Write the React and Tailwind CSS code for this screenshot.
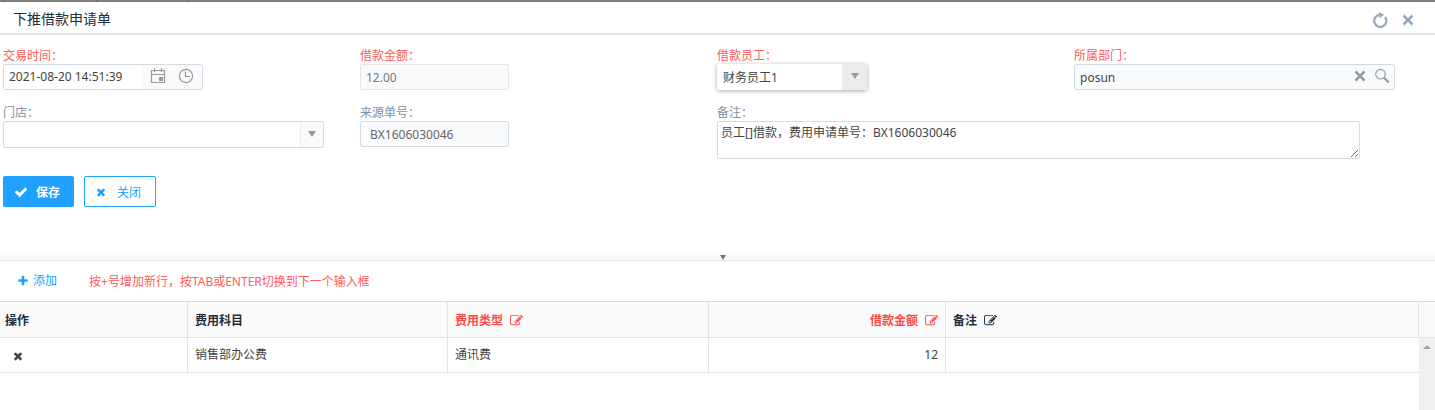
import { useState } from 'react';

// Icon shapes share the 1792 unit grid
const ICONS = {
  edit: 'M888 1184l116-116-152-152-116 116v56h96v96h56zm440-720q-16-16-33 1l-350 350q-17 17-1 33t33-1l350-350q17-17 1-33zm80 594v190q0 119-84.5 203.5t-203.5 84.5h-832q-119 0-203.5-84.5t-84.5-203.5v-832q0-119 84.5-203.5t203.5-84.5h832q63 0 117 25 15 7 18 23 3 17-9 29l-49 49q-14 14-32 8-23-6-45-6h-832q-66 0-113 47t-47 113v832q0 66 47 113t113 47h832q66 0 113-47t47-113v-126q0-13 9-22l64-64q15-15 35-7t20 29zm-96-738l288 288-672 672h-288v-288zm444 132l-92 92-288-288 92-92q28-28 68-28t68 28l152 152q28 28 28 68t-28 68z',
  times: 'M1490 1322q0 40-28 68l-136 136q-28 28-68 28t-68-28l-294-294-294 294q-28 28-68 28t-68-28l-136-136q-28-28-28-68t28-68l294-294-294-294q-28-28-28-68t28-68l136-136q28-28 68-28t68 28l294 294 294-294q28-28 68-28t68 28l136 136q28 28 28 68t-28 68l-294 294 294 294q28 28 28 68z',
  check: 'M1671 566q0 40-28 68l-724 724-136 136q-28 28-68 28t-68-28l-136-136-362-362q-28-28-28-68t28-68l136-136q28-28 68-28t68 28l294 295 656-657q28-28 68-28t68 28l136 136q28 28 28 68z',
  plus: 'M1600 736v192q0 40-28 68t-68 28h-416v416q0 40-28 68t-68 28h-192q-40 0-68-28t-28-68v-416h-416q-40 0-68-28t-28-68v-192q0-40 28-68t68-28h416v-416q0-40 28-68t68-28h192q40 0 68 28t28 68v416h416q40 0 68 28t28 68z',
};

const Icon = ({ name, className }) => (
  <svg viewBox="0 0 1792 1792" fill="currentColor" className={className} aria-hidden="true">
    <path d={ICONS[name]} />
  </svg>
);

const Cross = ({ className }) => (
  <svg viewBox="0 0 12 12" fill="none" stroke="currentColor" strokeWidth="2.6" className={className} aria-hidden="true">
    <path d="M1.5 1.5l9 9M10.5 1.5l-9 9" />
  </svg>
);

const Triangle = ({ className }) => (
  <svg viewBox="0 0 8 6" preserveAspectRatio="none" fill="currentColor" className={className} aria-hidden="true">
    <path d="M0 0h8L4 6z" />
  </svg>
);

const Field = ({ id, label, required, className = '', children }) => (
  <div className={className}>
    <label htmlFor={id} className={`block h-4 leading-[18px] ${required ? 'text-[#ff5b5b]' : 'text-[#8391a5]'}`}>
      {label}
    </label>
    {children}
  </div>
);

const Header = () => (
  <header className="flex h-[33px] items-center justify-between border-b-2 border-[#e5e5e5] pr-[21px] pl-[13px]">
    <h1 className="pt-0.5 text-sm text-[#1f2d3d]">下推借款申请单</h1>
    <div className="flex items-center gap-3.5 pt-1 text-[#99a9bf]">
      <button type="button" aria-label="刷新">
        <svg viewBox="0 0 16 16" className="size-4" fill="none" aria-hidden="true">
          <path d="M13 5A6.1 6.1 0 1 1 7.5 2.8" stroke="currentColor" strokeWidth="2.3" />
          <path d="M6.8 0L12.2 2.7 7.6 6.2z" fill="currentColor" />
        </svg>
      </button>
      <button type="button" aria-label="关闭窗口">
        <Cross className="size-3" />
      </button>
    </div>
  </header>
);

const LoanForm = () => {
  const [time, setTime] = useState('2021-08-20 14:51:39');
  const [remark, setRemark] = useState('员工[]借款，费用申请单号：BX1606030046');

  return (
    <form className="pt-3 pr-1 pl-[3px]" onSubmit={(e) => e.preventDefault()}>
      <div className="grid grid-cols-4 gap-y-3.5">
        <Field id="time" label="交易时间：" required>
          <div className="mt-px flex h-[26px] w-[200px] rounded-xs border border-[#d3dce6] bg-[#fafafa]">
            <input
              id="time"
              value={time}
              onChange={(e) => setTime(e.target.value)}
              className="min-w-0 flex-1 bg-white pl-[5px] outline-none"
            />
            <div className="flex items-center gap-3 px-2 pb-0.5 text-[#999]">
              <button type="button" aria-label="选择日期">
                <svg viewBox="0 0 16 16" className="size-4" fill="none" stroke="currentColor" aria-hidden="true">
                  <path d="M1.5 2.5h13v12h-13zM1.5 6.5h13M4.5 0v4M11.5 0v4" strokeWidth="1.2" />
                  <path d="M9 9h4v4H9z" fill="currentColor" stroke="none" />
                </svg>
              </button>
              <button type="button" aria-label="选择时间">
                <svg viewBox="0 0 16 16" className="size-4" fill="none" stroke="currentColor" aria-hidden="true">
                  <circle cx="8" cy="8" r="6.6" strokeWidth="1.2" />
                  <path d="M7.5 3.5v5h4.5" strokeWidth="1.2" />
                </svg>
              </button>
            </div>
          </div>
        </Field>

        <Field id="amount" label="借款金额：" required>
          <input
            id="amount"
            readOnly
            value="12.00"
            className="mt-px block h-[26px] w-[149px] rounded-xs border border-[#e5e5e5] bg-[#f9fafc] px-[5px] text-[#777] outline-none"
          />
        </Field>

        <Field id="employee" label="借款员工：" required>
          <div className="relative mt-px w-[150px] rounded-xs shadow-[0_1px_4px_rgba(0,0,0,0.35)]">
            <select id="employee" className="block h-[26px] w-full appearance-none rounded-xs bg-white pt-0.5 pr-7 pl-1.5 outline-none">
              <option>财务员工1</option>
            </select>
            <span className="pointer-events-none absolute inset-y-0 right-0 flex w-[25px] items-center justify-center rounded-r-xs bg-[#ebebeb] pb-0.5 text-[#999]">
              <Triangle className="h-1.5 w-2" />
            </span>
          </div>
        </Field>

        <Field id="department" label="所属部门：" required>
          <div className="mt-px flex h-[26px] w-9/10 items-center rounded-xs border border-[#d3dce6] bg-[#f9fafc]">
            <input id="department" defaultValue="posun" className="h-full min-w-0 flex-1 bg-transparent pl-[5px] outline-none" />
            <div className="flex items-center gap-2 pr-1 pb-0.5 text-[#999]">
              <button type="button" aria-label="清除">
                <Cross className="size-3" />
              </button>
              <button type="button" aria-label="搜索">
                <svg viewBox="0 0 16 16" className="size-4" fill="none" stroke="currentColor" aria-hidden="true">
                  <circle cx="6.5" cy="6.2" r="4.8" strokeWidth="1.2" />
                  <path d="M10 9.8l4.8 4.6" strokeWidth="2.2" />
                </svg>
              </button>
            </div>
          </div>
        </Field>

        <Field id="store" label="门店：">
          <div className="relative mt-px w-9/10">
            <select id="store" className="block h-[27px] w-full appearance-none rounded-xs border border-[#d3dce6] bg-white pr-7 pl-1.5 outline-none">
              <option></option>
            </select>
            <span className="pointer-events-none absolute inset-y-px right-px flex w-[23px] items-center justify-center border-l border-[#ececec] bg-[#fafafa] pb-0.5 text-[#999]">
              <Triangle className="h-1.5 w-2" />
            </span>
          </div>
        </Field>

        <Field id="source" label="来源单号：">
          <input
            id="source"
            readOnly
            value="BX1606030046"
            className="mt-px block h-[26px] w-[149px] rounded-xs border border-[#d3dce6] bg-[#f9fafc] px-[9px] text-[#666] outline-none"
          />
        </Field>

        <Field id="remark" label="备注：" className="col-span-2">
          <textarea
            id="remark"
            value={remark}
            onChange={(e) => setRemark(e.target.value)}
            className="mt-px block h-[38px] w-9/10 rounded-xs border border-[#d3dce6] bg-white px-[3px] py-0.5 leading-[18px] outline-none"
          />
        </Field>
      </div>

      <div className="mt-[17px] mb-[46px] flex gap-2.5">
        <button type="submit" className="flex h-[31px] items-center gap-2 rounded-xs bg-[#20a0ff] pr-3.5 pl-[11px] font-bold text-white">
          <Icon name="check" className="size-3.5" />
          <span className="pt-0.5">保存</span>
        </button>
        <button type="button" className="flex h-[31px] items-center gap-2.5 rounded-xs border border-[#20a0ff] bg-white pr-3.5 pl-2.5 text-[#20a0ff]">
          <Icon name="times" className="size-3" />
          <span className="pt-0.5">关闭</span>
        </button>
      </div>
    </form>
  );
};

const columns = [
  { title: '操作', className: 'w-[188px] pl-[5px]' },
  { title: '费用科目', className: 'w-[260px] pl-[7px]' },
  { title: '费用类型', className: 'w-[261px] pl-[7px] text-[#ff4949]', editable: true },
  { title: '借款金额', className: 'w-[237px] pr-[7px] text-right text-[#ff4949]', editable: true },
  { title: '备注', className: 'pl-[7px]', editable: true },
];

const ExpenseTable = () => (
  <table className="w-full table-fixed border-separate border-spacing-0">
    <thead>
      <tr className="h-[37px] bg-[#fafafa] text-left text-[#1f2d3d]">
        {columns.map((col) => (
          <th key={col.title} className={`border-t border-r border-b border-[#e4e4e4] border-t-[#d3dce6] pt-0.5 font-bold ${col.className}`}>
            <span className="inline-flex items-center gap-[7px]">
              {col.title}
              {col.editable && <Icon name="edit" className="size-[13px]" />}
            </span>
          </th>
        ))}
        <th className="w-4 border-t border-b border-[#e4e4e4] border-t-[#d3dce6]" />
      </tr>
    </thead>
    <tbody>
      <tr className="h-[35px]">
        <td className="border-r border-b border-[#e4e4e4] pl-3">
          <button type="button" aria-label="删除" className="block pt-0.5">
            <Icon name="times" className="size-3" />
          </button>
        </td>
        <td className="border-r border-b border-[#e4e4e4] pl-[7px]">销售部办公费</td>
        <td className="border-r border-b border-[#e4e4e4] pl-[7px]">通讯费</td>
        <td className="border-r border-b border-[#e4e4e4] pr-[7px] text-right">12</td>
        <td className="border-b border-[#e4e4e4]" />
        {/* scroll track */}
        <td rowSpan={2} className="bg-[#f0f0f0] pt-[7px] align-top text-[#a3a3a3]">
          <Triangle className="mx-auto h-1 w-2 rotate-180" />
        </td>
      </tr>
      <tr className="h-[37px]">
        <td colSpan={5} />
      </tr>
    </tbody>
  </table>
);

const App = () => (
  <div className="bg-white font-['Noto_Sans','Noto_Sans_CJK_SC',sans-serif] text-xs text-[#444]">
    <div className="flex h-0.5 bg-[#827f7f]">
      <span className="w-[5px] border-r border-[#666]" />
      <span className="w-[92px] border-r border-[#666]" />
      <span className="w-[91px] border-r border-[#666]" />
    </div>
    <Header />
    <LoanForm />
    <div className="flex h-2 items-end justify-center border-b border-[#e4e4e4] bg-[#fafafa] pl-2.5 text-[#777]">
      <Triangle className="h-[5px] w-1.5" />
    </div>
    <div className="flex h-10 items-center gap-8 pl-[17px]">
      <button type="button" className="flex items-center gap-1 text-[#20a0ff]">
        <Icon name="plus" className="size-3" />
        添加
      </button>
      <p className="pt-0.5 text-[#ff5b5b]">按+号增加新行，按TAB或ENTER切换到下一个输入框</p>
    </div>
    <ExpenseTable />
  </div>
);

export default App;
